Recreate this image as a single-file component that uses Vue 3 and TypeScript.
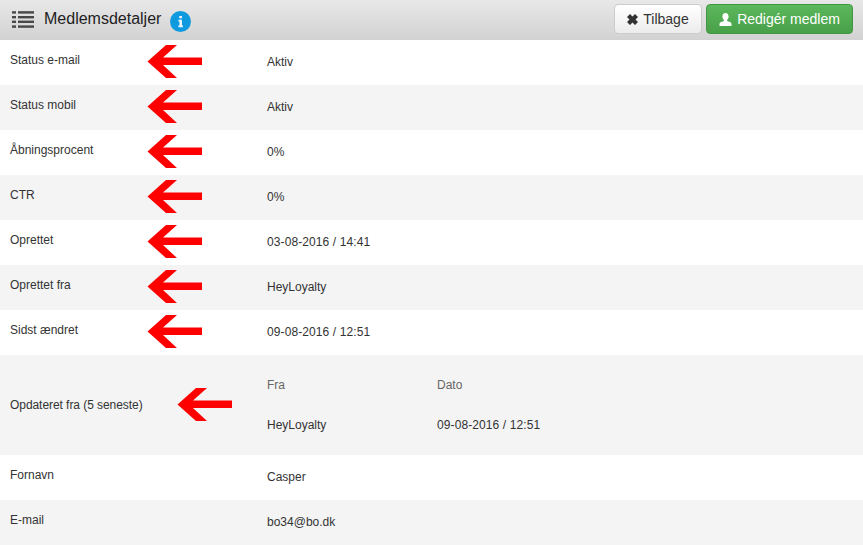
<script setup lang="ts">
interface Row { label: string; value: string }
const topRows: Row[] = [
  { label: 'Status e-mail', value: 'Aktiv' },
  { label: 'Status mobil', value: 'Aktiv' },
  { label: 'Åbningsprocent', value: '0%' },
  { label: 'CTR', value: '0%' },
  { label: 'Oprettet', value: '03-08-2016 / 14:41' },
  { label: 'Oprettet fra', value: 'HeyLoyalty' },
  { label: 'Sidst ændret', value: '09-08-2016 / 12:51' },
]
const bottomRows: Row[] = [
  { label: 'Fornavn', value: 'Casper' },
  { label: 'E-mail', value: 'bo34@bo.dk' },
]
const isDate = (text: string): boolean => text.includes('/')
</script>

<template>
  <div class="page">
    <header class="bar">
      <div class="title-group">
        <svg class="list-icon" width="22" height="17" viewBox="0 0 22 17" fill="#484848">
          <rect x="0" y="0.2" width="4" height="2.4" /><rect x="6" y="0.2" width="16" height="2.4" />
          <rect x="0" y="5" width="4" height="2.4" /><rect x="6" y="5" width="16" height="2.4" />
          <rect x="0" y="9.6" width="4" height="2.4" /><rect x="6" y="9.6" width="16" height="2.4" />
          <rect x="0" y="14.4" width="4" height="2.4" /><rect x="6" y="14.4" width="16" height="2.4" />
        </svg>
        <h1 class="title">Medlemsdetaljer</h1>
        <svg class="info-icon" width="21" height="21" viewBox="0 0 21 21">
          <circle cx="10.5" cy="10.5" r="10.5" fill="#0f9ae0" />
          <path d="M9.200 5h2.800v2.300H9.200zM8.400 8.800h3.600v5.800h1v1.600H8.400v-1.600h1v-4.200h-1z" fill="#e8f4fb" />
        </svg>
      </div>
      <div class="actions">
        <button class="btn btn-back" type="button">
          <svg width="11" height="11" viewBox="0 0 11 11" fill="#333">
            <path d="M3 0 5.500 2.500 8 0l3 3-2.500 2.500L11 8l-3 3-2.500-2.500L3 11 0 8l2.500-2.500L0 3z" />
          </svg>
          Tilbage
        </button>
        <button class="btn btn-edit" type="button">
          <svg width="13" height="13" viewBox="0 0 13 13" fill="#fff">
            <path d="M6.500 0C8.400 0 9.600 1.500 9.600 3.600c0 1.500-.6 2.800-1.500 3.500v.9c1.800.6 4.400 1.300 4.400 2.800V13H.5v-2.200c0-1.500 2.600-2.200 4.400-2.800v-.9C4 6.400 3.400 5.100 3.400 3.600 3.400 1.500 4.600 0 6.500 0z" />
          </svg>
          Redigér medlem
        </button>
      </div>
    </header>

    <div v-for="row in topRows" :key="row.label" class="row">
      <div class="label">{{ row.label }}</div>
      <div class="value" :class="{ date: isDate(row.value) }">{{ row.value }}</div>
      <svg class="arrow" width="56" height="34" viewBox="0 0 56 34" fill="#fe0000">
        <path d="M0.500 16.500 19 0H30L16 12.500H55V20H16L30 33H19z" />
      </svg>
    </div>

    <div class="row row-tall">
      <div class="label">Opdateret fra (5 seneste)</div>
      <div class="history">
        <div class="history-line muted"><span class="col">Fra</span><span>Dato</span></div>
        <div class="history-line"><span class="col">HeyLoyalty</span><span class="date">09-08-2016 / 12:51</span></div>
      </div>
      <svg class="arrow arrow-wide" width="56" height="34" viewBox="0 0 56 34" fill="#fe0000">
        <path d="M0.500 16.500 19 0H30L16 12.500H55V20H16L30 33H19z" />
      </svg>
    </div>

    <div v-for="row in bottomRows" :key="row.label" class="row">
      <div class="label">{{ row.label }}</div>
      <div class="value">{{ row.value }}</div>
    </div>
  </div>
</template>

<style>
html, body { margin: 0; background: #fff; overflow: hidden; }
</style>

<style scoped>
.page {
  width: 863px;
  height: 545px;
  overflow: hidden;
  font-family: "Liberation Sans", Arial, sans-serif;
  font-size: 12px;
  color: #333;
}
.bar {
  height: 40px;
  box-sizing: border-box;
  padding: 4px 10px 0 12px;
  display: flex;
  justify-content: space-between;
  align-items: flex-start;
  background: linear-gradient(#e8e8e8, #d2d2d2);
}
.title-group {
  display: flex;
  align-items: center;
  height: 30px;
}
.list-icon { margin-right: 10px; }
.title {
  margin: 0 9px 0 0;
  font-size: 16px;
  font-weight: 400;
  color: #222;
}
.info-icon { margin-top: 4px; }
.actions { display: flex; gap: 4px; }
.btn {
  height: 30px;
  box-sizing: border-box;
  border-radius: 4px;
  font-family: inherit;
  font-size: 14px;
  padding: 0;
  display: flex;
  align-items: center;
  justify-content: center;
  gap: 5px;
}
.btn-back {
  width: 88px;
  color: #333;
  background: linear-gradient(#fff, #ececec);
  border: 1px solid #ccc;
}
.btn-edit {
  width: 147px;
  color: #fff;
  background: linear-gradient(#5cb85c, #48a048);
  border: 1px solid #419641;
}
.row {
  position: relative;
  height: 45px;
  display: flex;
  align-items: center;
  background: #fff;
}
.row:nth-child(odd) { background: #f4f4f4; }
.row-tall { height: 100px; }
.label {
  width: 267px;
  box-sizing: border-box;
  padding: 0 0 6px 10px;
}
.row-tall .label { padding-bottom: 0; letter-spacing: -0.06px; }
.value { padding-bottom: 1px; }
.date { letter-spacing: 0.1px; }
.arrow {
  position: absolute;
  left: 147px;
  top: 5px;
}
.arrow-wide { left: 177px; top: 33px; }
.history {
  display: flex;
  flex-direction: column;
  gap: 26px;
}
.history-line { display: flex; line-height: 14px; }
.col { width: 170px; }
.muted { color: #666; }
</style>
